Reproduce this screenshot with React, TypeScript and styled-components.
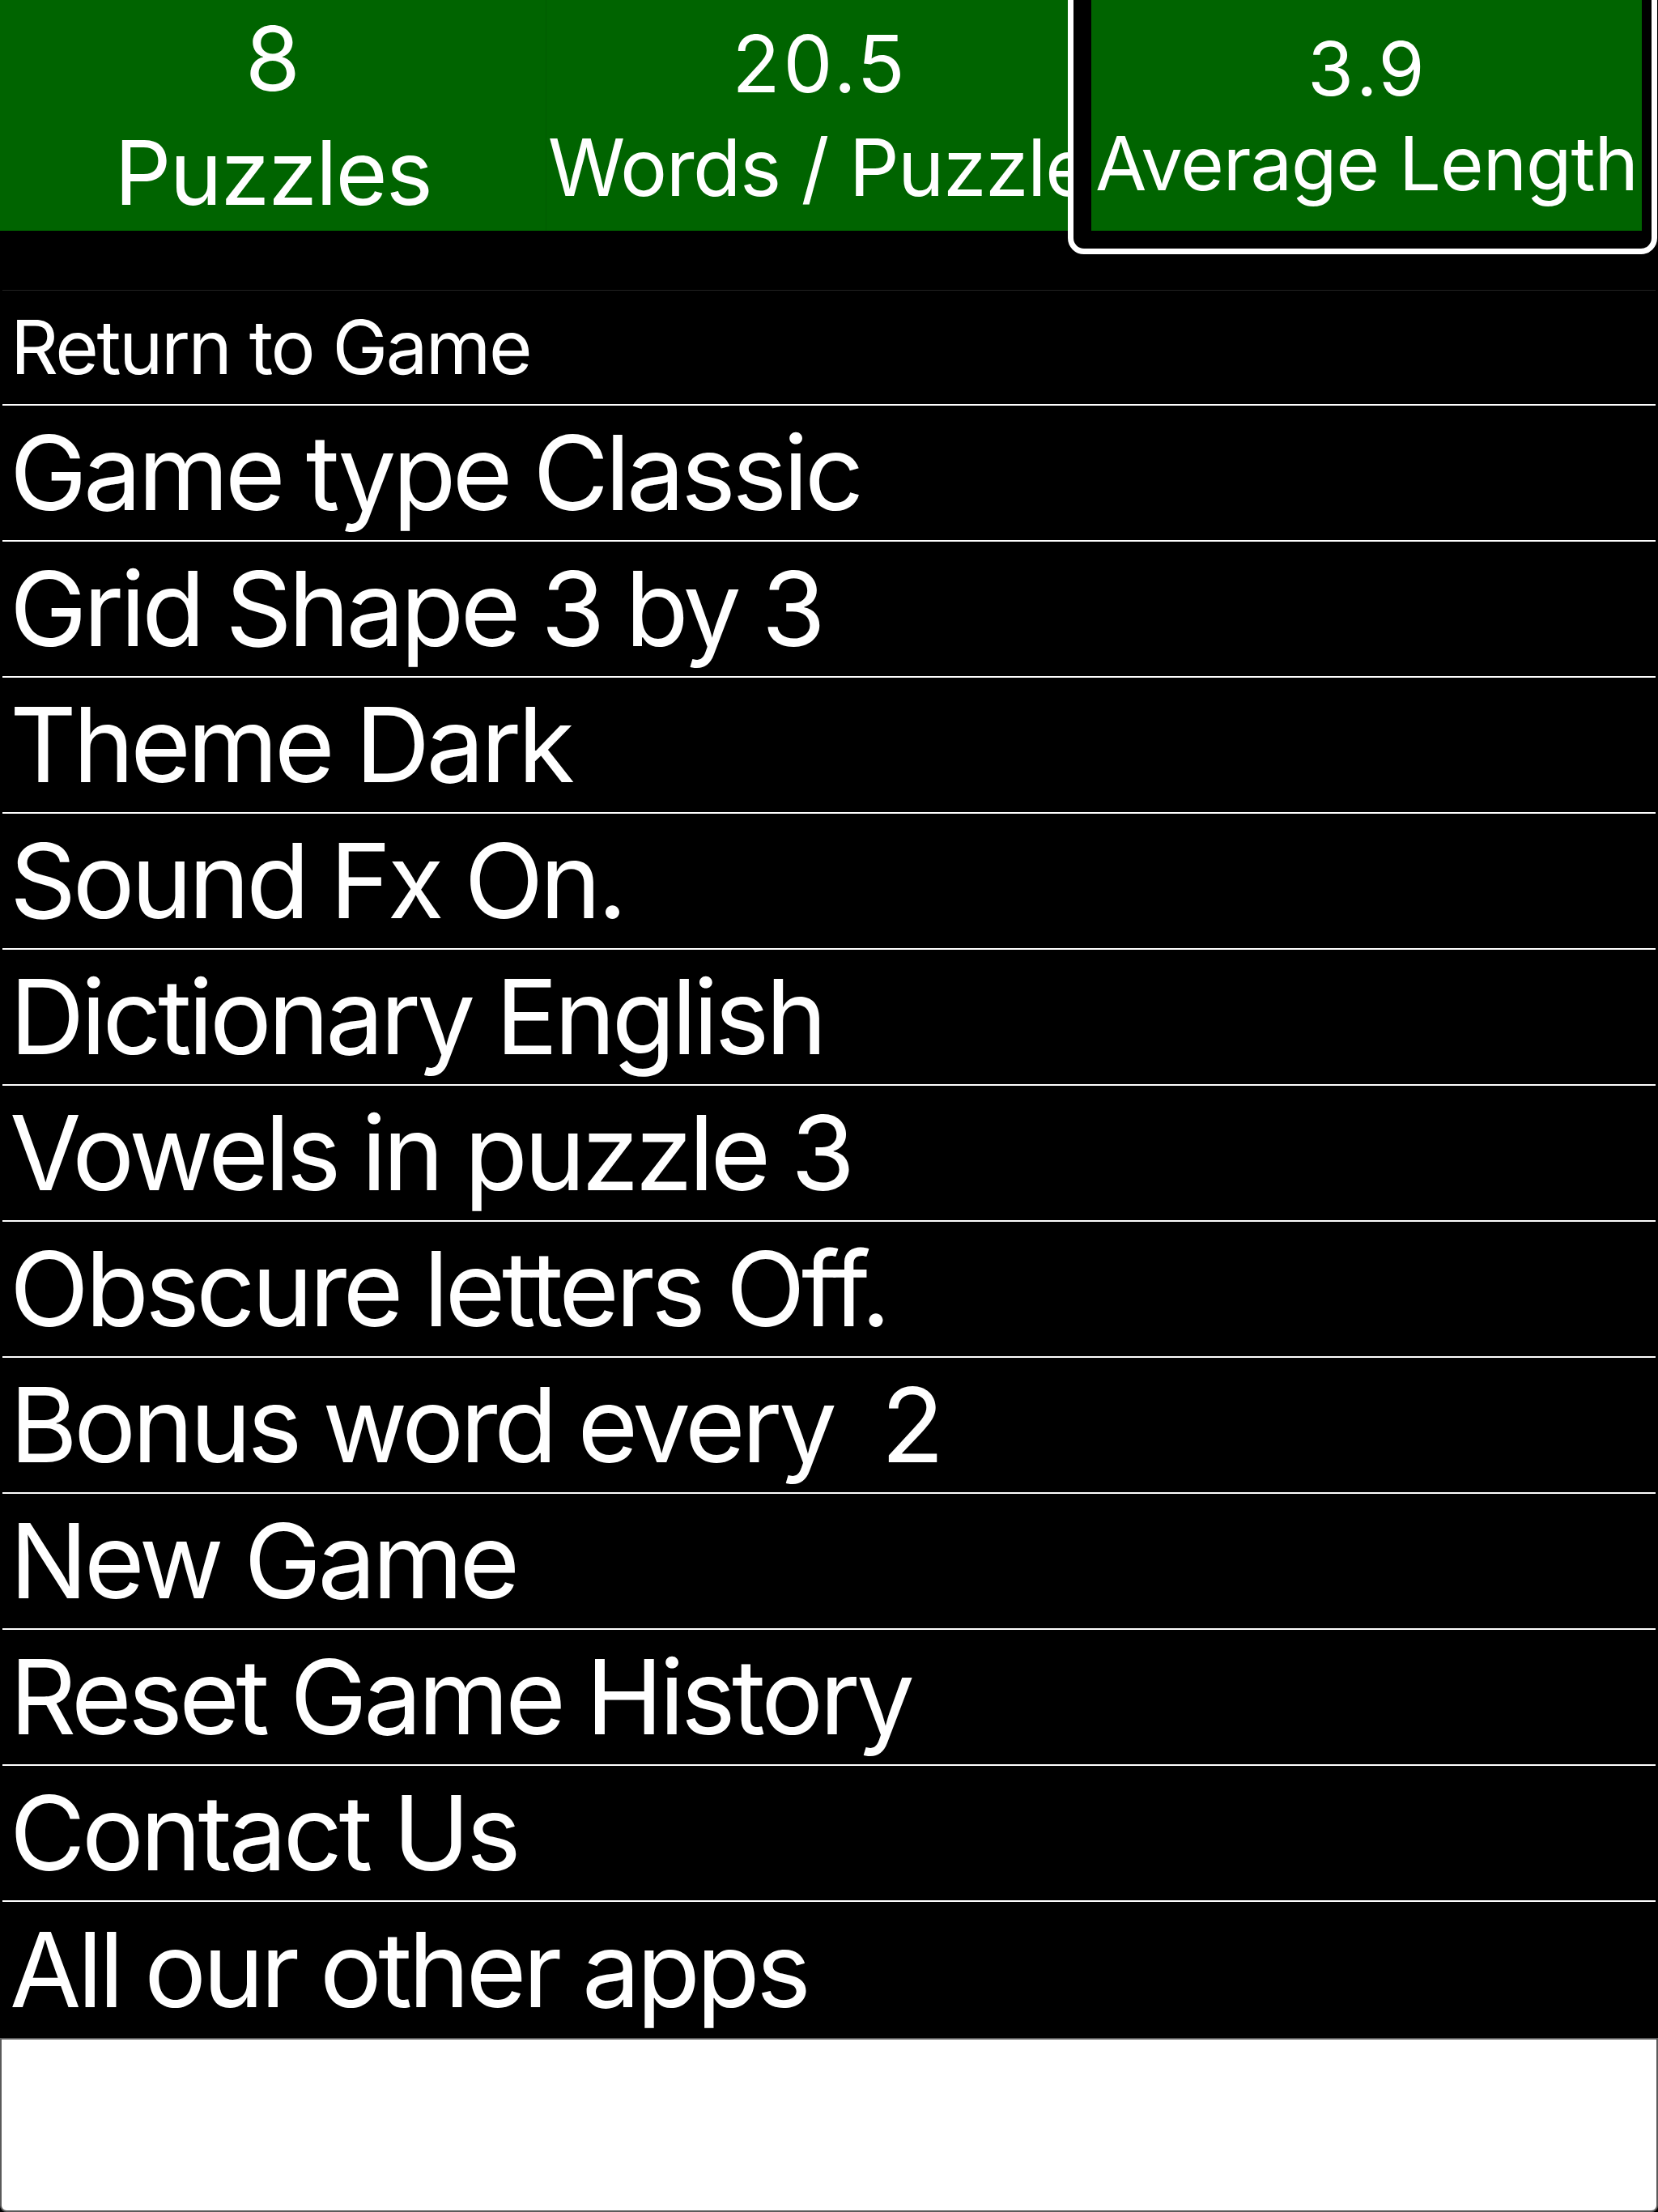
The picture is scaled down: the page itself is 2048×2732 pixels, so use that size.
import React from "react";
import styled, { createGlobalStyle } from "styled-components";

const GlobalStyle = createGlobalStyle`
  html, body {
    margin: 0;
    padding: 0;
    background: #000;
  }
  body {
    font-family: Inter, "Noto Sans", "Liberation Sans", sans-serif;
    color: #fff;
    overflow: hidden;
  }
`;

type Stat = { value: string; label: string; size: number; gap: number; track: number };

const stats: Stat[] = [
  { value: "8", label: "Puzzles", size: 110, gap: 141, track: -2 },
  { value: "20.5", label: "Words / Puzzle", size: 97, gap: 128, track: -1.5 },
  { value: "3.9", label: "Average Length", size: 92, gap: 117, track: -1 },
];

const menuItems = [
  "Game type Classic",
  "Grid Shape 3 by 3",
  "Theme Dark",
  "Sound Fx On.",
  "Dictionary English",
  "Vowels in puzzle 3",
  "Obscure letters Off.",
  "Bonus word every  2",
  "New Game",
  "Reset Game History",
  "Contact Us",
  "All our other apps",
];

const App = () => {
  return (
    <Screen>
      <GlobalStyle />
      {/* Stats header */}
      <StatsBar>
        {stats.map((stat, i) =>
          i === stats.length - 1 ? (
            <SelectedStat key={stat.label}>
              <StatBody $size={stat.size} $gap={stat.gap} $track={stat.track}>
                <StatValue>{stat.value}</StatValue>
                <span>{stat.label}</span>
              </StatBody>
            </SelectedStat>
          ) : (
            <StatCell key={stat.label} $divider={i > 0}>
              <StatBody $size={stat.size} $gap={stat.gap} $track={stat.track}>
                <StatValue>{stat.value}</StatValue>
                <span>{stat.label}</span>
              </StatBody>
            </StatCell>
          )
        )}
      </StatsBar>

      {/* Settings menu */}
      <Menu>
        <ReturnRow>
          <ReturnText>Return to Game</ReturnText>
        </ReturnRow>
        {menuItems.map((item, i) => (
          <MenuRow key={item} $last={i === menuItems.length - 1}>
            <MenuText>{item}</MenuText>
          </MenuRow>
        ))}
      </Menu>

      <Footer />
    </Screen>
  );
};

export default App;

const Screen = styled.div`
  width: 2048px;
  height: 2732px;
  display: flex;
  flex-direction: column;
  background: #000;
`;

const StatsBar = styled.div`
  display: grid;
  grid-template-columns: 674px 674px 1fr;
  height: 285px;
  margin-bottom: 73px;
`;

const StatCell = styled.div<{ $divider?: boolean }>`
  background: #006400;
  border-left: ${(p) => (p.$divider ? "1px solid #005c00" : "none")};
  display: flex;
  min-width: 0;
`;

const SelectedStat = styled.div`
  position: relative;
  z-index: 1;
  display: flex;
  padding-right: 20px;

  &::before {
    content: "";
    position: absolute;
    left: -29px;
    right: 1px;
    top: -40px;
    bottom: -29px;
    background: #000;
    border: 7px solid #fff;
    border-radius: 20px;
    z-index: -1;
  }
`;

const StatBody = styled.div<{ $size: number; $gap: number; $track: number }>`
  flex: 1;
  min-width: 0;
  background: #006400;
  display: flex;
  flex-direction: column;
  align-items: center;
  justify-content: center;
  font-size: ${(p) => p.$size}px;
  line-height: ${(p) => p.$gap}px;
  letter-spacing: ${(p) => p.$track}px;
  white-space: nowrap;
`;

const StatValue = styled.span`
  font-variant-numeric: tabular-nums;
  letter-spacing: 1px;
  padding-left: 1px;
`;

const Menu = styled.div`
  display: flex;
  flex-direction: column;
  margin: 0 3px;
`;

const ReturnRow = styled.div`
  height: 140px;
  border-top: 1px solid #202020;
  border-bottom: 2px solid #fff;
  display: flex;
  align-items: center;
  padding-left: 10px;
`;

const ReturnText = styled.span`
  font-size: 92px;
  line-height: 1;
  letter-spacing: -2.5px;
`;

const MenuRow = styled.div<{ $last?: boolean }>`
  height: ${(p) => (p.$last ? "168px" : "166px")};
  border-bottom: ${(p) => (p.$last ? "none" : "2px solid #fff")};
  display: flex;
  align-items: center;
  padding-left: 9px;
`;

const MenuText = styled.span`
  font-size: 128px;
  line-height: 1;
  letter-spacing: -4.5px;
  word-spacing: -2px;
  white-space: pre;
`;

const Footer = styled.div`
  flex: 1;
  background: #fff;
  border: 2px solid #5a5a5a;
  border-radius: 0 0 8px 8px;
`;
